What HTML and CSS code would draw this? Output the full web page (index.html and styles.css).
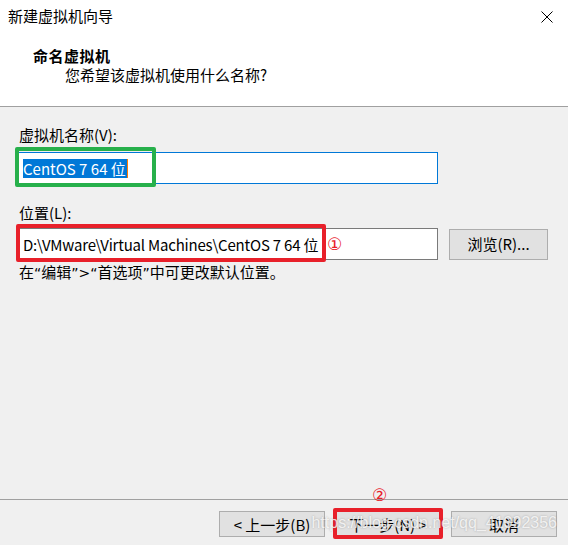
FILE: index.html
```html
<!DOCTYPE html>
<html lang="zh-CN">
<head>
<meta charset="utf-8">
<title>新建虚拟机向导</title>
<link rel="stylesheet" href="styles.css">
</head>
<body>
<div class="dialog">
  <div class="header">
    <div class="titlebar">
      <span class="title">新建虚拟机向导</span>
      <svg class="close" width="12" height="12" viewBox="0 0 12 12"><path d="M0.5 0.5 L11.5 11.5 M11.5 0.5 L0.5 11.5" stroke="#000" stroke-width="1" fill="none"/></svg>
    </div>
    <div class="heading">命名虚拟机</div>
    <div class="subheading">您希望该虚拟机使用什么名称?</div>
  </div>
  <div class="content">
    <div class="label">虚拟机名称(V):</div>
    <div class="field-row">
      <div class="textbox focused"><span class="selected">CentOS 7 64 位</span><span class="caret"></span></div>
      <div class="mark-green"></div>
    </div>
    <div class="label label-loc">位置(L):</div>
    <div class="field-row loc-row">
      <div class="textbox path">D:\VMware\Virtual Machines\CentOS 7 64 位</div>
      <button class="btn browse">浏览(R)...</button>
      <div class="mark-red"></div>
      <span class="num num1">①</span>
    </div>
    <div class="hint">在<span class="q">“</span>编辑<span class="q">”&gt;“</span>首选项<span class="q">”</span>中可更改默认位置。</div>
  </div>
  <div class="footer">
    <button class="btn">&lt; 上一步(B)</button>
    <div class="next-wrap">
      <button class="btn default">下一步(N) &gt;</button>
      <div class="mark-red2"></div>
      <span class="num num2">②</span>
    </div>
    <button class="btn">取消</button>
    <span class="watermark">https://blog.csdn.net/qq_41092356</span>
  </div>
</div>
</body>
</html>
```
FILE: styles.css
```css
* { box-sizing: border-box; }
html, body { margin: 0; padding: 0; }
body {
  width: 568px;
  height: 545px;
  overflow: hidden;
  font-family: "Noto Sans CJK SC", "Noto Sans", sans-serif;
  font-size: 15px;
  color: #000;
}
.dialog {
  display: flex;
  flex-direction: column;
  height: 545px;
  background: #f0f0f0;
}
.header {
  background: #fff;
  height: 107px;
  border-bottom: 1px solid #a0a0a0;
}
.titlebar {
  display: flex;
  justify-content: space-between;
  align-items: center;
  padding: 6px 15px 0 8px;
  line-height: 20px;
}
.close { display: block; margin-top: 1px; }
.heading {
  font-weight: bold;
  padding-left: 33px;
  margin-top: 20px;
  line-height: 19px;
  letter-spacing: 0.5px;
}
.subheading {
  padding-left: 65px;
  line-height: 20px;
}
.content {
  flex: 1;
  padding: 18px 11px 0 18px;
}
.label { line-height: 20px; padding-left: 1px; }
.label-loc { margin-top: 19px; }
.field-row {
  position: relative;
  display: flex;
  align-items: center;
  gap: 11px;
  margin-top: 7px;
}
.loc-row { margin-top: 5px; }
.textbox {
  width: 420px;
  height: 32px;
  background: #fff;
  border: 1px solid #7a7a7a;
  padding: 0 4px;
  line-height: 29px;
  white-space: nowrap;
  overflow: hidden;
  display: flex;
  align-items: center;
}
.textbox.path { letter-spacing: -0.2px; }
.textbox.focused { border-color: #0078d7; }
.selected {
  background: #0078d7;
  color: #fff;
  line-height: 19px;
  padding-right: 1px;
}
.caret {
  display: inline-block;
  width: 1px;
  height: 19px;
  background: #ff7a00;
}
.btn {
  font: inherit;
  font-size: 15px;
  height: 31px;
  width: 99px;
  background: #e1e1e1;
  border: 1px solid #adadad;
  color: #000;
  padding: 0;
  line-height: 28px;
}
.hint { line-height: 20px; margin-top: 2px; padding-left: 1px; }
.q { font-family: "DejaVu Sans", sans-serif; font-size: 14px; }
.footer {
  position: relative;
  border-top: 1px solid #a0a0a0;
  height: 46px;
  display: flex;
  justify-content: flex-end;
  gap: 10px;
  padding: 11px 11px 0 0;
}
.footer .btn { width: 106px; height: 26px; line-height: 23px; }
.footer .btn.default { border-color: #0078d7; }
.next-wrap { position: relative; }
.mark-green {
  position: absolute;
  left: -3px;
  top: -5px;
  width: 141px;
  height: 40px;
  border: 4px solid #27b04b;
  border-radius: 2px;
}
.mark-red {
  position: absolute;
  left: -2px;
  top: -4px;
  width: 310px;
  height: 38px;
  border: 4px solid #e8202a;
  border-radius: 2px;
}
.mark-red2 {
  position: absolute;
  left: -2px;
  top: -3px;
  width: 110px;
  height: 31px;
  border: 4px solid #e8202a;
  border-radius: 2px;
}
.num {
  position: absolute;
  color: #e8202a;
  font-family: "DejaVu Sans", sans-serif;
  font-size: 17px;
  line-height: 18px;
}
.num1 { left: 309px; top: 7px; }
.num2 { left: 37px; top: -25px; }
.watermark {
  position: absolute;
  right: 11px;
  top: 13px;
  font-family: "Liberation Sans", sans-serif;
  font-size: 16px;
  line-height: 20px;
  color: rgba(255,255,255,0.8);
  text-shadow: 0 0 2px rgba(90,90,90,0.45);
  pointer-events: none;
}
```
